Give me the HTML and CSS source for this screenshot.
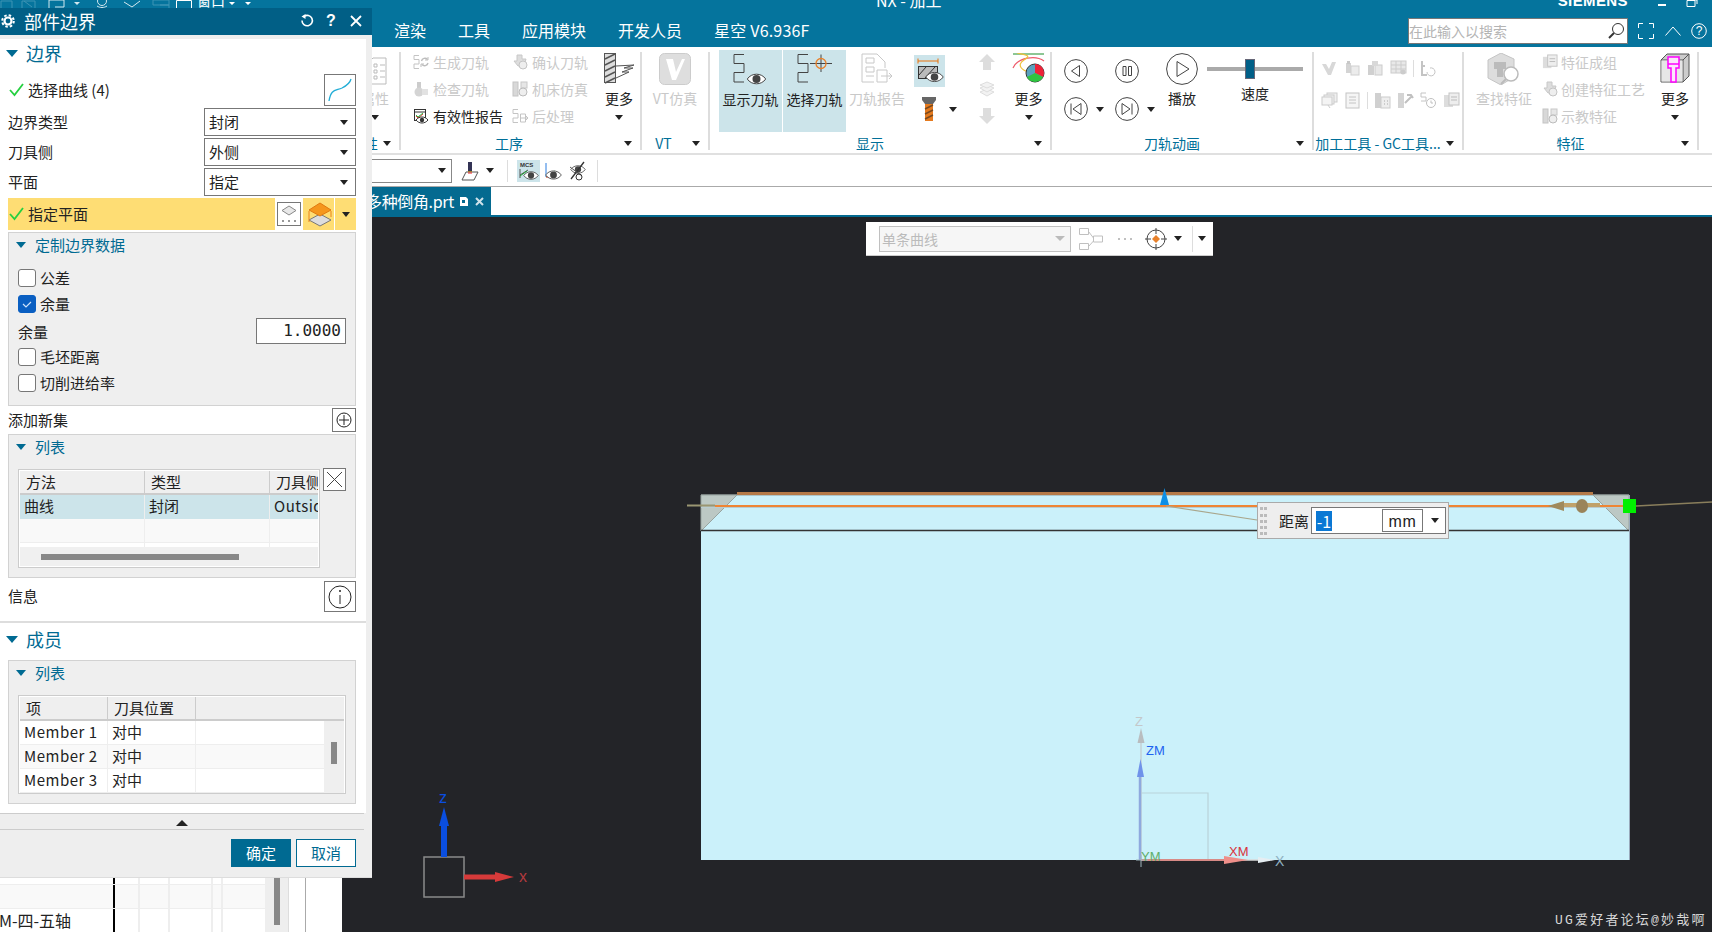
FILE: index.html
```html
<!DOCTYPE html>
<html lang="zh-CN">
<head>
<meta charset="utf-8">
<title>NX - 加工</title>
<link rel="stylesheet" href="styles.css">
</head>
<body>
<svg class="sprite" xmlns="http://www.w3.org/2000/svg">
  <symbol id="zz" viewBox="0 0 16 16"><path d="M6 1.500H1V5.500H6V10H1V14.500H6" fill="none" stroke="currentColor"/></symbol>
  <symbol id="gen" viewBox="0 0 16 16"><path d="M6 1.500H1V5.500H6V10H1V14.500H6" fill="none" stroke="#c4c4c4"/><path d="M8.500 7a3.500 3.500 0 0 1 6-1.500M15 9a3.500 3.500 0 0 1-6 1.500" fill="none" stroke="#bdbdbd" stroke-width="1.400"/><path d="M15 3v3h-3M8 13v-3h3" fill="none" stroke="#bdbdbd"/></symbol>
  <symbol id="post" viewBox="0 0 16 16"><path d="M6 1.500H1V5.500H6V10H1V14.500H6" fill="none" stroke="#c4c4c4"/><path d="M8.500 6h5v8h-5zM8.500 10H16M14 8l2 2-2 2" fill="#fff" stroke="#c4c4c4"/></symbol>
  <symbol id="eye" viewBox="0 0 20 14"><path d="M.8 7C5 .6 15 .6 19.200 7 15 13.400 5 13.400 .8 7Z" fill="#fff" stroke="currentColor"/><circle cx="10" cy="7" r="4" fill="currentColor"/></symbol>
  <symbol id="blob1" viewBox="0 0 16 16"><path d="M5 1h5v4h4l-2 7H6L2 7h3z" fill="#ddd" stroke="#c8c8c8"/><circle cx="11" cy="11" r="4" fill="#eee" stroke="#c4c4c4"/></symbol>
  <symbol id="blob2" viewBox="0 0 16 16"><rect x="4" y="1" width="4" height="7" fill="#ccc"/><circle cx="6" cy="11" r="4.500" fill="#d4d4d4"/><rect x="9" y="8" width="6" height="6" fill="#e2e2e2"/></symbol>
  <symbol id="blob3" viewBox="0 0 16 16"><rect x="1" y="1" width="5" height="14" fill="#d8d8d8" stroke="#c4c4c4"/><rect x="9" y="1" width="6" height="6" fill="#e6e6e6" stroke="#c8c8c8"/><circle cx="11" cy="11" r="4" fill="#eee" stroke="#bbb"/></symbol>
  <symbol id="blob4" viewBox="0 0 17 17"><path d="M1 4h4l3 5 3-7h4l-5 13H7z" fill="#d8d8d8"/></symbol>
  <symbol id="blob5" viewBox="0 0 17 17"><rect x="2" y="3" width="5" height="10" fill="#d4d4d4"/><rect x="7" y="6" width="8" height="9" fill="#ececec" stroke="#d0d0d0"/><rect x="3" y="1" width="3" height="3" fill="#c8c8c8"/></symbol>
  <symbol id="blob6" viewBox="0 0 17 17"><rect x="1" y="5" width="6" height="10" fill="#d0d0d0"/><rect x="8" y="5" width="7" height="10" fill="#e8e8e8" stroke="#ccc"/><rect x="5" y="1" width="6" height="5" fill="#d8d8d8"/></symbol>
  <symbol id="blob7" viewBox="0 0 17 17"><rect x="1" y="1" width="15" height="12" fill="#e8e8e8" stroke="#ccc"/><path d="M1 5h15M1 9h15M6 1v12M11 1v12" stroke="#ccc"/><circle cx="13" cy="12" r="2.500" fill="#ccc"/></symbol>
  <symbol id="blob8" viewBox="0 0 17 17"><path d="M2 1v14h5M2 6h3" stroke="#c4c4c4" fill="none" stroke-width="2"/><path d="M7 12a4 4 0 1 0 3-4" stroke="#c4c4c4" fill="none"/></symbol>
  <symbol id="blob9" viewBox="0 0 17 17"><rect x="6" y="1" width="10" height="9" fill="#f0f0f0" stroke="#ccc"/><rect x="3" y="3" width="10" height="9" fill="#f0f0f0" stroke="#ccc"/><rect x="1" y="5" width="10" height="8" fill="#f4f4f4" stroke="#ccc"/><path d="M7 13l2 3" stroke="#ccc"/></symbol>
  <symbol id="blob10" viewBox="0 0 17 17"><rect x="2" y="1" width="13" height="15" fill="#f5f5f5" stroke="#c4c4c4"/><path d="M5 5h7M5 8h7M5 11h7" stroke="#c4c4c4"/></symbol>
  <symbol id="blob11" viewBox="0 0 17 17"><rect x="1" y="1" width="6" height="15" fill="#d0d0d0"/><rect x="7" y="5" width="9" height="11" fill="#eee" stroke="#ccc"/><path d="M10 9h1M13 9h1M10 12h1M13 12h1" stroke="#aaa"/></symbol>
  <symbol id="blob12" viewBox="0 0 17 17"><rect x="1" y="1" width="6" height="15" fill="#d4d4d4"/><path d="M8 11l7-7M10 3l4 0 2 3" stroke="#c0c0c0" fill="none" stroke-width="2"/></symbol>
  <symbol id="blob13" viewBox="0 0 17 17"><path d="M6 1H1V5H6V9H1" fill="none" stroke="#c4c4c4"/><circle cx="11" cy="11" r="4.500" fill="#fff" stroke="#c0c0c0"/><path d="M11 8.500V11h2" stroke="#c0c0c0" fill="none"/></symbol>
  <symbol id="blob14" viewBox="0 0 17 17"><rect x="1" y="3" width="9" height="12" fill="#ddd"/><rect x="6" y="1" width="10" height="12" fill="#eee" stroke="#c4c4c4"/><path d="M8 5h6M8 8h6" stroke="#bbb"/></symbol>
</svg>

<header class="appbar">
  <div class="toprow">
    <svg class="qat" viewBox="0 0 270 8" width="270" height="8">
      <g fill="none" stroke="#3f94b4"><path d="M1 8V1h11v7M22 8V1h13v7"/><path d="M24 1l8 6"/></g>
      <g fill="none" stroke="#d3e8ef"><path d="M49 8V0h15v7h-9"/><circle cx="102" cy="1" r="4.500"/><path d="M97 6c3 2 7 2 10 0M102 7v1"/><path d="M124 2l8 5 8-6"/></g>
      <path d="M74 2h6l-3 3z" fill="#d3e8ef"/>
      <g fill="none" stroke="#3f94b4"><path d="M153 0h16v5h-16zM160 5h9v3"/></g>
      <path d="M176.500 8V.5h15V8" fill="none" stroke="#fff"/>
      <text x="197" y="6" class="qat-text">窗口</text>
      <path d="M229 2h6l-3 3zM245 2h6l-3 3z" fill="#fff"/>
    </svg>
    <span class="apptitle">NX - 加工</span>
    <span class="brand">SIEMENS</span>
    <svg class="winbtns" viewBox="0 0 57 13" width="57" height="13"><path d="M3 5h8" stroke="#fff" stroke-width="2"/><path d="M32 .5h8v6h-8zM35 0h7v4" fill="none" stroke="#fff"/></svg>
  </div>
  <div class="menurow">
    <nav class="menus"><span>渲染</span><span>工具</span><span>应用模块</span><span>开发人员</span><span class="menu-last">星空 V6.936F</span></nav>
    <div class="search">
      <span class="search-text">在此输入以搜索</span>
      <svg viewBox="0 0 18 18" width="18" height="18"><circle cx="11" cy="7" r="5.500" fill="none" stroke="#333"/><path d="M7 11l-5 5" stroke="#333" stroke-width="2"/></svg>
    </div>
    <svg class="hd-full" viewBox="0 0 16 16" width="16" height="16"><path d="M.5 5V.5H5M11 .5h4.500V5M15.500 11v4.500H11M5 15.500H.5V11" fill="none" stroke="#fff"/></svg>
    <svg class="hd-up" viewBox="0 0 16 10" width="16" height="10"><path d="M.5 9.500L8 1l7.500 8.500" fill="none" stroke="#fff"/></svg>
    <svg class="hd-help" viewBox="0 0 16 16" width="16" height="16"><circle cx="8" cy="8" r="7.300" fill="none" stroke="#fff"/><text x="8" y="12" text-anchor="middle" class="help-q">?</text></svg>
  </div>
</header>

<section class="ribbon">
  <div class="rg g0">
    <div class="rb rb-end">
      <div class="big w28">
        <svg class="bico" viewBox="0 0 28 32" width="28" height="32"><path d="M9 8l3-3h13v26H9z" fill="#fff" stroke="#bbb"/><path d="M13 11h3v3h-3zM19 12h5M13 17h3v3h-3zM19 18h5M13 23h3v3h-3zM19 24h5" fill="none" stroke="#bbb"/></svg>
        <span class="bigt off">属性</span>
        <i class="tri tri-more"></i>
      </div>
    </div>
    <div class="rf rf-right"><span class="rl">属性</span><i class="tri"></i></div>
  </div>

  <div class="rg g1">
    <div class="rb">
      <div class="rows w99">
        <div class="ri off"><svg class="i16"><use href="#gen"/></svg><span>生成刀轨</span></div>
        <div class="ri off"><svg class="i16"><use href="#blob2"/></svg><span>检查刀轨</span></div>
        <div class="ri"><svg class="i16" viewBox="0 0 16 16"><rect x="1.500" y="1.500" width="11" height="11" fill="#fff" stroke="#333"/><path d="M1.500 4h11" stroke="#333"/><path d="M3 8l2 2 5-4" stroke="#e33" fill="none"/><path d="M3 7l2 2 5-4" stroke="#2b4" fill="none"/><path d="M3 12c3-4 9-4 12 0-3 4-9 4-12 0z" fill="#fff" stroke="#333"/><circle cx="9" cy="12" r="2.200" fill="#333"/></svg><span>有效性报告</span></div>
      </div>
      <div class="rows w92">
        <div class="ri off"><svg class="i16"><use href="#blob1"/></svg><span>确认刀轨</span></div>
        <div class="ri off"><svg class="i16"><use href="#blob3"/></svg><span>机床仿真</span></div>
        <div class="ri off"><svg class="i16"><use href="#post"/></svg><span>后处理</span></div>
      </div>
      <div class="big w30 more">
        <svg class="bico" viewBox="0 0 30 32" width="30" height="32"><rect x=".5" y=".5" width="11" height="29" fill="#ddd" stroke="#555"/><path d="M1 6l10-5M1 12l10-5M1 18l10-5M1 24l10-5M1 30l10-5" stroke="#555" stroke-width="1.500"/><path d="M12 13l18-1-10 3 9 0-11 4 7 0-13 6" fill="#fff" stroke="#555"/></svg>
        <span class="bigt">更多</span>
        <i class="tri tri-more"></i>
      </div>
    </div>
    <div class="rf"><span class="rl">工序</span><i class="tri"></i></div>
  </div>

  <div class="rg g2">
    <div class="rb">
      <div class="big w66">
        <svg class="bico" viewBox="0 0 32 32" width="32" height="32"><rect x=".5" y=".5" width="31" height="31" rx="5" fill="#dedede" stroke="#ccc"/><path d="M7 6h7l3 13 6-13h3l-9 21h-4z" fill="#fff"/></svg>
        <span class="bigt off">VT仿真</span>
      </div>
    </div>
    <div class="rf"><span class="rl">VT</span><i class="tri"></i></div>
  </div>

  <div class="rg g3">
    <div class="rb">
      <div class="big tog w63">
        <svg class="bico" viewBox="0 0 40 32" width="40" height="32"><path d="M13 .5H3V9.500H13V18.500H3V28H13" fill="none" stroke="#444"/><use href="#eye" x="15" y="18" width="21" height="14" class="c-eye"/></svg>
        <span class="bigt">显示刀轨</span>
      </div>
      <div class="big tog w63 gap1">
        <svg class="bico" viewBox="0 0 40 32" width="40" height="32"><path d="M13 .5H3V9.500H13V18.500H3V28H13" fill="none" stroke="#444"/><path d="M15 9.500H37M26 .5V18" stroke="#444"/><circle cx="26" cy="9.500" r="5" fill="none" stroke="#e8812b" stroke-width="1.300"/></svg>
        <span class="bigt">选择刀轨</span>
      </div>
      <div class="big w62">
        <svg class="bico" viewBox="0 0 34 32" width="34" height="32"><path d="M2 1h15l8 8v6M2 1v28h12" fill="none" stroke="#c8c8c8"/><path d="M6 5h8v5H6zM6 14h8v5H6zM6 23h8" fill="none" stroke="#c8c8c8"/><path d="M17 17h10v12H17zM21 23h11M29 20l3 3-3 3" fill="#fff" stroke="#c8c8c8"/></svg>
        <span class="bigt off">刀轨报告</span>
      </div>
      <div class="toolcol">
        <span class="toolbtn"><svg viewBox="0 0 31 32" width="31" height="32"><path d="M4 6h20M4 3.500v5M24 3.500v5" stroke="#e8720c" fill="none"/><rect x="4.500" y="11.500" width="19" height="12" fill="#bbb" stroke="#333"/><path d="M5 20l7-8M11 23l10-11M17 23l6-6" stroke="#333"/><use href="#eye" x="11" y="15" width="19" height="14" class="c-eye"/></svg></span>
        <div class="toolrow">
          <svg viewBox="0 0 14 24" width="14" height="24"><path d="M0 0h14v3l-3 4H3L0 3z" fill="#666"/><rect x="3" y="7" width="8" height="17" fill="#e57a1e"/><path d="M3 12l8-4M3 17l8-4M3 22l8-4" stroke="#7a4a1e" stroke-width="1.500"/></svg>
          <i class="tri"></i>
        </div>
      </div>
      <div class="updown">
        <svg viewBox="0 0 20 20" width="20" height="20"><path d="M10 2l8 8h-4v8H6v-8H2z" fill="#ddd"/></svg>
        <svg viewBox="0 0 20 20" width="20" height="20"><g fill="#f2f2f2" stroke="#ddd"><path d="M3 13l7-3 7 3-7 4z"/><path d="M3 9l7-3 7 3-7 4z"/><path d="M3 6l7-3 7 3-7 3z"/></g></svg>
        <svg viewBox="0 0 20 20" width="20" height="20"><path d="M10 18l8-8h-4V2H6v8H2z" fill="#ddd"/></svg>
      </div>
      <div class="big w33 more mo-d">
        <svg class="bico" viewBox="0 0 33 32" width="33" height="32"><path d="M1 1h31" stroke="#1a8f2a"/><path d="M1 15C6 4 24 2 32 8" fill="none" stroke="#ee5a6a" stroke-width="1.200"/><path d="M5 0c9 2 15 2 7 7-8 5-2 11 6 12" fill="none" stroke="#f0c23c" stroke-width="1.200"/><circle cx="23" cy="20" r="9" fill="#5aa1be" stroke="#333"/><path d="M23 20V11a9 9 0 0 1 8 13z" fill="#ee2238"/><path d="M23 20l8 4a9 9 0 0 1-16 0z" fill="#2fc53f"/></svg>
        <span class="bigt">更多</span>
        <i class="tri tri-more"></i>
      </div>
    </div>
    <div class="rf"><span class="rl">显示</span><i class="tri"></i></div>
  </div>

  <div class="rg g4">
    <div class="rb">
      <div class="anim">
        <div class="animcell"><svg class="circ" viewBox="0 0 24 24"><circle cx="12" cy="12" r="11.400"/><path d="M15.500 6.500v11L7.500 12z"/></svg></div>
        <div class="animcell"><svg class="circ" viewBox="0 0 24 24"><circle cx="12" cy="12" r="11.400"/><path d="M8 7.500h3v9H8zM13.500 7.500h3v9h-3z"/></svg></div>
        <div class="animcell"><svg class="circ" viewBox="0 0 24 24"><circle cx="12" cy="12" r="11.400"/><path d="M7 6.500v11M17 6.500v11L9 12z"/></svg><i class="tri"></i></div>
        <div class="animcell"><svg class="circ" viewBox="0 0 24 24"><circle cx="12" cy="12" r="11.400"/><path d="M17 6.500v11M7 6.500v11l8-5.500z"/></svg><i class="tri"></i></div>
      </div>
      <div class="big w32 play">
        <svg class="circ circ-big" viewBox="0 0 32 32"><circle cx="16" cy="16" r="15.400"/><path d="M11 8.500v15L23 16z"/></svg>
        <span class="bigt">播放</span>
      </div>
      <div class="speed">
        <div class="track"><i class="thumb"></i></div>
        <span class="bigt">速度</span>
      </div>
    </div>
    <div class="rf"><span class="rl">刀轨动画</span><i class="tri"></i></div>
  </div>

  <div class="rg g5">
    <div class="rb rb-col">
      <div class="mini">
        <svg class="i17"><use href="#blob4"/></svg><svg class="i17"><use href="#blob5"/></svg><svg class="i17"><use href="#blob6"/></svg><svg class="i17"><use href="#blob7"/></svg><i class="vsep"></i><svg class="i17"><use href="#blob8"/></svg>
      </div>
      <div class="mini">
        <svg class="i17"><use href="#blob9"/></svg><svg class="i17"><use href="#blob10"/></svg><i class="vsep"></i><svg class="i17"><use href="#blob11"/></svg><svg class="i17"><use href="#blob12"/></svg><svg class="i17"><use href="#blob13"/></svg><svg class="i17"><use href="#blob14"/></svg>
      </div>
    </div>
    <div class="rf"><span class="rl">加工工具 - GC工具...</span><i class="tri"></i></div>
  </div>

  <div class="rg g6">
    <div class="rb">
      <div class="big w56">
        <svg class="bico" viewBox="0 0 34 32" width="34" height="32"><path d="M1 7l13-7 13 6v18l-13 8-13-7z" fill="#ddd" stroke="#c4c4c4"/><path d="M7 9h12v7h-3v8h-6v-8H7z" fill="#bbb"/><circle cx="24" cy="21" r="7" fill="#fff" stroke="#bbb" stroke-width="1.500"/><path d="M19 26l-5 5" stroke="#bbb" stroke-width="2"/></svg>
        <span class="bigt off">查找特征</span>
      </div>
      <div class="rows feat">
        <div class="ri off"><svg class="i16"><use href="#blob14"/></svg><span>特征成组</span></div>
        <div class="ri off"><svg class="i16"><use href="#blob1"/></svg><span>创建特征工艺</span></div>
        <div class="ri off"><svg class="i16"><use href="#blob3"/></svg><span>示教特征</span></div>
      </div>
      <div class="big w30 more mo-f">
        <svg class="bico" viewBox="0 0 30 32" width="30" height="32"><path d="M1 7l6-6h22v22l-6 6H1z" fill="#ccc" stroke="#555"/><path d="M1 7h22v22M23 7l6-6" fill="none" stroke="#555"/><rect x="1.500" y="7.500" width="21" height="21" fill="#e6e6e6"/><path d="M8 4h11v11h-3v14h-5V15H8z" fill="#fbe6fb" stroke="#f0f" stroke-width="1.500"/><path d="M8 11h11" stroke="#f0f" stroke-width="1.500"/></svg>
        <span class="bigt">更多</span>
        <i class="tri tri-more"></i>
      </div>
    </div>
    <div class="rf"><span class="rl">特征</span><i class="tri"></i></div>
  </div>
</section>

<section class="quick">
  <div class="combo"><i class="tri"></i></div>
  <svg class="q-a" viewBox="0 0 18 20" width="18" height="20"><rect x="7" y="1" width="4" height="9" fill="#335"/><path d="M7 10h4v6H7z" fill="#f4b000"/><path d="M1 19l4-8h12l-4 8z" fill="#fff" stroke="#555"/><path d="M7 12h4" stroke="#e22"/></svg>
  <i class="tri q-tri"></i>
  <i class="qsep q-s1"></i>
  <span class="q-on"><svg viewBox="0 0 23 22" width="23" height="22"><text x="3" y="7" class="mcs">MCS</text><path d="M3 9v9M3 15l8-5" stroke="#555" fill="none"/><path d="M3 16l7-5" stroke="#2a3" fill="none"/><use href="#eye" x="6" y="10" width="16" height="11" class="c-eye"/></svg></span>
  <svg class="q-b" viewBox="0 0 18 20" width="18" height="20"><path d="M2 2v14" stroke="#2a7de0"/><path d="M2 16l9-6" stroke="#2a3"/><path d="M2 16h5" stroke="#e33"/><use href="#eye" x="1" y="8" width="17" height="12" class="c-eye"/></svg>
  <svg class="q-c" viewBox="0 0 18 20" width="18" height="20"><use href="#eye" x="1" y="3" width="16" height="11" class="c-eye"/><path d="M15 1L2 18" stroke="#333" stroke-width="1.300"/><path d="M1 6l12 9" stroke="#555"/><circle cx="10" cy="16" r="3" fill="none" stroke="#333"/></svg>
  <i class="qsep q-s2"></i>
</section>

<section class="tabs">
  <div class="tab">
    <span class="tab-t">多种倒角.prt</span>
    <svg class="tab-doc" viewBox="0 0 10 11" width="10" height="11"><path d="M1 1h6l2 2v7H1z" fill="#fff"/><path d="M3 4h3v3H3z" fill="#046a90"/></svg>
    <svg class="tab-x" viewBox="0 0 9 9" width="9" height="9"><path d="M1 1l7 7M8 1L1 8" stroke="#cfe2ea" stroke-width="2"/></svg>
  </div>
</section>

<main class="viewport">
  <svg class="scene" viewBox="0 217 1712 715" width="1712" height="715">
    <rect x="701" y="495" width="928" height="365" fill="#cbf1fa"/>
    <path d="M701 495H1629" stroke="#8f9a98"/>
    <path d="M701 495h36l-36 36zM1593 495h36v36z" fill="#bcc8c4" stroke="#98a4a0"/>
    <rect x="737" y="492" width="856" height="3" fill="#b57a48"/>
    <path d="M701 530.500H1629" stroke="#333" stroke-width="1.400"/>
    <path d="M1629.500 495V860" stroke="#9ab"/>
    <path d="M701 507.500H1629" stroke="#b9ccd0"/>
    <path d="M687 505.500H715" stroke="#9a9672" stroke-width="2"/>
    <path d="M715 506H1623" stroke="#ee8534" stroke-width="2"/>
    <path d="M1636 506L1712 502" stroke="#8a7f5c" stroke-width="1.500"/>
    <path d="M1166 506L1257 520" stroke="#a9a68c" stroke-width="1.200"/>
    <path d="M1164.500 488L1169 505H1160z" fill="#0c8fe6"/>
    <path d="M1548 506L1564 501V511z" fill="#a08a5c"/>
    <path d="M1564 505H1600" stroke="#c0a26a" stroke-width="4"/>
    <ellipse cx="1582" cy="506" rx="6" ry="7" fill="#9a845a"/>
    <rect x="1623" y="499" width="13" height="14" fill="#00f000"/>

    <path d="M1141.500 793H1208V860" fill="none" stroke="#b9d3d9" stroke-width="1.200"/>
    <path d="M1141 860V735" stroke="#c5d0d4" stroke-width="1.500"/>
    <path d="M1141 728l3.500 15h-7z" fill="#b9bdbf"/>
    <path d="M1140 860V775" stroke="#8fa9de" stroke-width="2.500"/>
    <path d="M1140.500 759l3.500 18h-7z" fill="#6f92ea"/>
    <path d="M1141 860H1270" stroke="#d9d9d9" stroke-width="1.500"/>
    <path d="M1141 860H1240" stroke="#d88a86" stroke-width="2"/>
    <path d="M1224 856l24 4-24 4z" fill="#ef8f8a"/>
    <path d="M1258 857l17 3-17 3z" fill="#e6eef2"/>
    <path d="M1136 860h12M1141 855v12" stroke="#9fb5bd"/>
    <text x="1135" y="726" class="ax ax-z">Z</text>
    <text x="1146" y="755" class="ax ax-zm">ZM</text>
    <text x="1141" y="861" class="ax ax-ym">YM</text>
    <text x="1229" y="856" class="ax ax-xm">XM</text>
    <text x="1275" y="866" class="ax ax-x">X</text>

    <rect x="424" y="857" width="40" height="40" fill="none" stroke="#8a8a8a" stroke-width="1.500"/>
    <path d="M444 857V825" stroke="#0a4ee0" stroke-width="6"/>
    <path d="M444 807l5 19h-10z" fill="#0a4ee0"/>
    <path d="M464 877H497" stroke="#d63a3a" stroke-width="5"/>
    <path d="M495 872l19 5-19 5z" fill="#d63a3a"/>
    <text x="439" y="803" class="ax ax-tz">z</text>
    <text x="519" y="882" class="ax ax-tx">x</text>
  </svg>

  <div class="selbar">
    <div class="selcombo"><span>单条曲线</span><i class="tri tri-pale"></i></div>
    <svg viewBox="0 0 24 24" width="24" height="24" class="sb-net"><path d="M.5 1.500h9v6h-9zM.5 16.500h9v6h-9zM14.500 9h9v6h-9zM9.500 4.500L14.500 11M9.500 19.500L14.500 14" fill="none" stroke="#c0c0c0"/></svg>
    <svg viewBox="0 0 14 4" width="14" height="4" class="sb-dots"><path d="M0 1h2v2H0zM6 1h2v2H6zM12 1h2v2h-2z" fill="#c0c0c0"/></svg>
    <svg viewBox="0 0 24 24" width="24" height="24" class="sb-snap"><circle cx="12" cy="12" r="9" fill="none" stroke="#444"/><path d="M12 1v6M12 17v6M1 12h6M17 12h6" stroke="#444"/><path d="M12 8l4 4-4 4-4-4z" fill="#e8812b"/></svg>
    <i class="tri sb-tri"></i>
    <i class="qsep sb-sep"></i>
    <i class="tri sb-tri2"></i>
  </div>

  <div class="dist">
    <span class="grip"></span><span class="grip"></span>
    <span class="dist-l">距离</span>
    <div class="dist-f">
      <span class="dist-v">-1</span>
      <span class="dist-u">mm</span>
      <i class="tri"></i>
    </div>
  </div>

  <div class="watermark">UG爱好者论坛@妙哉啊</div>

  <div class="under">
    <div class="under-tbl">
      <div class="urow u1"><i></i><i></i><i></i><i></i><i></i><i></i></div>
      <div class="urow u2"><i></i><i></i><i></i><i></i><i></i><i></i></div>
      <div class="urow u3"><i class="utext">M-四-五轴</i><i></i><i></i><i></i><i></i><i></i></div>
    </div>
    <div class="uscroll"><i></i></div>
    <div class="ublank"></div>
    <div class="ublank2"></div>
  </div>
</main>

<aside class="panel">
  <div class="ptitle">
    <svg viewBox="0 0 14 14" width="14" height="14"><circle cx="7" cy="7" r="3.500" fill="none" stroke="#fff" stroke-width="2.200"/><circle cx="7" cy="7" r="5.800" fill="none" stroke="#fff" stroke-width="2" stroke-dasharray="2.500 2.050"/></svg>
    <span class="ptitle-t">部件边界</span>
    <svg class="pt-reset" viewBox="0 0 14 14" width="14" height="14"><path d="M4 2.500a5.200 5.200 0 1 1-2 4" fill="none" stroke="#fff" stroke-width="1.600"/><path d="M5.500 0v5L1.500 2.500z" fill="#fff"/></svg>
    <span class="pt-help">?</span>
    <svg class="pt-x" viewBox="0 0 12 12" width="12" height="12"><path d="M1 1l10 10M11 1L1 11" stroke="#fff" stroke-width="1.800"/></svg>
  </div>

  <div class="pbody">
    <section class="psec psec-a">
      <div class="sechead"><i class="tri tri-blue"></i><span>边界</span></div>
      <div class="prow r-curve">
        <svg class="chk" viewBox="0 0 15 14" width="15" height="14"><path d="M1 7l4.500 5L14 1" fill="none" stroke="#25d040" stroke-width="1.800"/></svg>
        <span class="ptext">选择曲线 (4)</span>
        <span class="iconbtn ib-r"><svg viewBox="0 0 30 30" width="30" height="30"><path d="M4 26c2-12 6-10 13-13 6-3 8-5 9-9" fill="none" stroke="#22add6" stroke-width="1.300"/></svg></span>
      </div>
      <div class="prow r-sel"><span class="plabel">边界类型</span><div class="sel"><span>封闭</span><i class="tri"></i></div></div>
      <div class="prow r-sel"><span class="plabel">刀具侧</span><div class="sel"><span>外侧</span><i class="tri"></i></div></div>
      <div class="prow r-sel"><span class="plabel">平面</span><div class="sel"><span>指定</span><i class="tri"></i></div></div>
      <div class="hl">
        <div class="hl-a">
          <svg class="chk" viewBox="0 0 15 14" width="15" height="14"><path d="M1 7l4.500 5L14 1" fill="none" stroke="#25d040" stroke-width="1.800"/></svg>
          <span class="ptext">指定平面</span>
        </div>
        <div class="hl-b"><span class="iconbtn ib-s"><svg viewBox="0 0 22 22" width="22" height="22"><path d="M11 3l7 4.500-7 4.500-7-4.500z" fill="#e8e8e8" stroke="#888"/><path d="M4 18h2M10 18h2M16 18h2" stroke="#333"/></svg></span></div>
        <div class="hl-c">
          <svg viewBox="0 0 26 25" width="26" height="25"><path d="M13 12l11 6-11 6L2 18z" fill="#ddd" stroke="#777"/><path d="M13 1l11 7-11 6L2 8z" fill="#f5971c" stroke="#e07a10"/><path d="M2 9v11M24 9v6" stroke="#e8841c"/></svg>
          <i class="hl-line"></i>
          <i class="tri"></i>
        </div>
      </div>
      <div class="box box-c">
        <div class="boxhead"><i class="tri tri-blue2"></i><span>定制边界数据</span></div>
        <div class="crow crow-first"><i class="cb"></i><span>公差</span></div>
        <div class="crow"><i class="cb on"><svg viewBox="0 0 18 18" width="18" height="18"><path d="M5 9l3 3 5-5" fill="none" stroke="#cfe3fa" stroke-width="1.200"/></svg></i><span>余量</span></div>
        <div class="crow crow-num"><span>余量</span><span class="num">1.0000</span></div>
        <div class="crow"><i class="cb"></i><span>毛坯距离</span></div>
        <div class="crow"><i class="cb"></i><span>切削进给率</span></div>
      </div>
      <div class="prow r-add">
        <span class="plabel">添加新集</span>
        <span class="iconbtn ib-a"><svg viewBox="0 0 22 22" width="22" height="22"><circle cx="11" cy="11" r="7" fill="none" stroke="#222"/><path d="M11 6v10M6 11h10" stroke="#222"/></svg></span>
      </div>
      <div class="box box-l">
        <div class="boxhead"><i class="tri tri-blue2"></i><span>列表</span></div>
        <div class="listwrap">
          <div class="tbl tbl-a">
            <div class="trow thead"><span>方法</span><span>类型</span><span>刀具侧</span></div>
            <div class="trow tsel"><span>曲线</span><span>封闭</span><span>Outside</span></div>
            <div class="trow talt"><span></span><span></span><span></span></div>
            <div class="trow tsliver"><span></span><span></span><span></span></div>
            <div class="hscroll"><i></i></div>
          </div>
          <span class="iconbtn ib-x"><svg viewBox="0 0 21 21" width="21" height="21"><path d="M3 3l15 15M18 3L3 18" stroke="#444"/></svg></span>
        </div>
      </div>
      <div class="prow r-info">
        <span class="plabel">信息</span>
        <span class="iconbtn ib-r"><svg viewBox="0 0 30 30" width="30" height="30"><circle cx="15" cy="15" r="11" fill="none" stroke="#222"/><path d="M15 13v9" stroke="#222"/><circle cx="15" cy="9" r="1" fill="#222"/></svg></span>
      </div>
    </section>

    <section class="psec psec-b">
      <div class="sechead"><i class="tri tri-blue"></i><span>成员</span></div>
      <div class="box box-m">
        <div class="boxhead"><i class="tri tri-blue2"></i><span>列表</span></div>
        <div class="tbl tbl-b">
          <div class="trow thead"><span>项</span><span>刀具位置</span><span></span></div>
          <div class="tb-body">
            <div class="tb-rows">
              <div class="trow"><span>Member 1</span><span>对中</span><span></span></div>
              <div class="trow talt"><span>Member 2</span><span>对中</span><span></span></div>
              <div class="trow"><span>Member 3</span><span>对中</span><span></span></div>
            </div>
            <div class="vscroll"><i></i></div>
          </div>
        </div>
      </div>
    </section>
  </div>

  <div class="collapse"><i class="tri tri-up"></i></div>
  <div class="pfoot">
    <button class="btn btn-ok" type="button">确定</button>
    <button class="btn btn-no" type="button">取消</button>
  </div>
</aside>
</body>
</html>
```

FILE: styles.css
```css
* { box-sizing: border-box; }
html, body { margin: 0; padding: 0; }
body {
  width: 1712px; height: 932px; overflow: hidden; position: relative;
  background: #fff; color: #222;
  font-family: "Noto Sans CJK SC", "Noto Sans", "Liberation Sans", sans-serif;
  font-size: 14px;
  display: flex; flex-direction: column;
}
.sprite { display: none; }
i { display: block; font-style: normal; }

.tri { width: 0; height: 0; flex: none; border-left: 4.5px solid transparent; border-right: 4.5px solid transparent; border-top: 5px solid #222; }
.off { color: #c9c9c9; }

/* header */
.appbar { height: 47px; background: #05749d; color: #fff; overflow: hidden; flex: none; }
.toprow { height: 14px; display: flex; align-items: flex-start; overflow: hidden; }
.qat { flex: none; }
.qat-text { font-size: 14px; fill: #fff; }
.apptitle { margin-left: 606px; margin-top: -9px; line-height: 18px; font-size: 16px; }
.brand { margin-left: auto; margin-top: -8px; font: bold 15px/18px "Liberation Sans", sans-serif; letter-spacing: .4px; }
.winbtns { margin-left: 27px; flex: none; }
.menurow { height: 33px; display: flex; align-items: center; }
.menus { display: flex; gap: 32px; margin-left: 394px; margin-top: -2px; font-size: 16px; white-space: nowrap; }
.menu-last { letter-spacing: .2px; }
.search { margin-left: auto; width: 220px; height: 26px; background: #fff; border: 1px solid #777; display: flex; align-items: center; justify-content: space-between; padding-right: 2px; }
.search-text { color: #b4b4b4; font-size: 14px; }
.hd-full { margin-left: 10px; }
.hd-up { margin-left: 11px; }
.hd-help { margin-left: 10px; margin-right: 5px; }
.help-q { font: 12px "Liberation Sans", sans-serif; fill: #fff; }

/* ribbon */
.ribbon { height: 108px; flex: none; display: flex; border-bottom: 2px solid #e0e0e0; background: #fff; }
.rg { margin-top: 5px; height: 98px; border-right: 2px solid #ddd; flex: none; display: flex; flex-direction: column; }
.g0 { width: 401px; } .g1 { width: 241px; } .g2 { width: 68px; } .g3 { width: 342px; }
.g4 { width: 262px; } .g5 { width: 150px; } .g6 { width: 235px; }
.rb { height: 84px; display: flex; flex: none; }
.rb-end { justify-content: flex-end; padding-right: 10px; }
.rb-col { flex-direction: column; padding: 8px 0 0 7px; gap: 15px; }
.rf { height: 14px; display: flex; align-items: center; padding-right: 8px; white-space: nowrap; }
.rl { flex: 1; text-align: center; color: #006f99; line-height: 16px; font-size: 14px; padding-right: 4px; }
.g1 .rl, .g2 .rl { padding-right: 7px; }
.rf-right .rl { text-align: right; padding-right: 5px; }

.big { display: flex; flex-direction: column; align-items: center; flex: none; }
.bico { margin-top: 1px; flex: none; }
.bigt { margin-top: 3px; line-height: 20px; font-size: 14px; white-space: nowrap; }
.tri-more { margin-top: 7px; }
.w28 { width: 28px; } .w30 { width: 30px; } .w32 { width: 32px; } .w33 { width: 33px; }
.w56 { width: 56px; } .w62 { width: 62px; } .w63 { width: 63px; } .w66 { width: 66px; }
.w99 { width: 99px; } .w92 { width: 92px; }
.g1 .rows.w99 { margin-left: 12px; }
.rows { margin-top: -4px; display: flex; flex-direction: column; flex: none; }
.ri { height: 27px; display: flex; align-items: center; gap: 4px; white-space: nowrap; }
.i16 { width: 16px; height: 16px; flex: none; }
.i17 { width: 17px; height: 17px; flex: none; }

.tog { margin-top: -2px; padding-top: 3px; height: 82px; background: #cce4ea; }
.g3 .tog:first-child { margin-left: 9px; }
.gap1 { margin-left: 1px; }
.toolcol { width: 50px; margin-left: 6px; flex: none; padding-top: 3px; }
.toolbtn { display: block; width: 31px; height: 32px; background: #cce4ea; }
.toolrow { display: flex; align-items: center; margin: 10px 0 0 8px; }
.toolrow .tri { margin-left: 13px; }
.updown { margin-left: 13px; width: 20px; display: flex; flex-direction: column; gap: 7px; flex: none; }
.mo-d { margin-left: 15px; }
.anim { margin: 7px 0 0 12px; display: grid; grid-template-columns: 51px 40px; row-gap: 14px; align-content: start; flex: none; }
.animcell { display: flex; align-items: center; }
.animcell .tri { margin-left: 8px; }
.circ { width: 24px; height: 24px; fill: none; stroke: #444; stroke-width: 1; }
.circ-big { width: 32px; height: 32px; margin-top: 1px; flex: none; }
.play { margin-left: 11px; }
.speed { margin-left: 9px; width: 96px; display: flex; flex-direction: column; align-items: center; flex: none; margin-top: 7px; }
.speed .bigt { margin-top: 4px; }
.track { width: 96px; height: 20px; background: linear-gradient(#aaa, #aaa) center / 100% 4px no-repeat; padding-left: 38px; }
.thumb { width: 10px; height: 20px; background: #005f87; border: 1px solid #667; }
.mini { display: flex; align-items: center; gap: 6px; height: 17px; }
.vsep { width: 1px; height: 17px; background: #ddd; }
.g6 .w56 { margin-left: 12px; }
.feat { margin-left: 10px; width: 113px; }
.feat .ri { gap: 3px; }
.mo-f { margin-left: 5px; }

/* quick toolbar */
.quick { height: 32px; flex: none; display: flex; align-items: center; border-bottom: 1px solid #aaa; background: #fff; }
.combo { width: 112px; height: 24px; margin-left: 340px; border: 1px solid #888; display: flex; align-items: center; justify-content: flex-end; padding-right: 5px; }
.q-a { margin-left: 9px; }
.q-tri { margin-left: 7px; }
.qsep { width: 1px; height: 22px; background: #ddd; flex: none; }
.q-s1 { margin-left: 13px; }
.q-on { width: 23px; height: 22px; margin-left: 9px; background: #cce4ea; display: block; }
.mcs { font: bold 6px "Liberation Sans", sans-serif; fill: #333; }
.q-b { margin-left: 4px; }
.q-c { margin-left: 7px; }
.q-s2 { margin-left: 10px; }
.c-eye { color: #444; }

/* tabs */
.tabs { height: 30px; flex: none; border-bottom: 2px solid #046a90; background: #fff; }
.tab { width: 151px; height: 28px; margin-left: 340px; background: #046a90; color: #fff; font-size: 16px; display: flex; align-items: center; padding-left: 26px; white-space: nowrap; }
.tab-t { letter-spacing: -.35px; }
.tab-doc { margin-left: 5px; }
.tab-x { margin-left: 6px; }

/* viewport */
.viewport { flex: 1; position: relative; background: #232428; overflow: hidden; }
.scene { position: absolute; left: 0; top: 0; }
.ax { font: 13px "Liberation Sans", sans-serif; }
.ax-z { fill: #c4c8ca; }
.ax-zm { fill: #1d63f0; }
.ax-ym { fill: #5fae6a; }
.ax-xm { fill: #d9333c; }
.ax-x { fill: #8fb0c0; font-size: 14px; }
.ax-tz { fill: #0a4ee0; font-size: 16px; }
.ax-tx { fill: #b23a3e; font-size: 16px; }

.selbar { position: absolute; left: 866px; top: 5px; width: 347px; height: 34px; background: #fff; border-bottom: 1px solid #ccc; display: flex; align-items: center; padding-left: 13px; }
.selcombo { width: 192px; height: 26px; border: 1px solid #c0c0c0; background: #f6f6f6; color: #bbb; display: flex; align-items: center; justify-content: space-between; padding: 0 5px 0 2px; flex: none; }
.tri-pale { border-top-color: #bbb; border-left-width: 5px; border-right-width: 5px; }
.sb-net { margin-left: 8px; flex: none; }
.sb-dots { margin-left: 15px; flex: none; }
.sb-snap { margin-left: 12px; flex: none; }
.sb-tri { margin-left: 6px; }
.sb-sep { margin-left: 10px; height: 26px; }
.sb-tri2 { margin-left: 5px; }

.dist { position: absolute; left: 1257px; top: 285px; width: 192px; height: 37px; background: #eee; border: 1px solid #aaa; display: flex; align-items: center; padding-left: 2px; }
.grip { width: 3px; height: 28px; border-left: 3px dotted #bbb; margin-right: 1px; flex: none; }
.dist-l { margin-left: 11px; line-height: 20px; font-size: 15px; }
.dist-f { margin-left: 2px; width: 135px; height: 27px; background: #fff; border: 1px solid #777; display: flex; align-items: center; padding-left: 4px; font-size: 16px; }
.dist-v { width: 16px; height: 20px; line-height: 20px; background: #0a78d4; color: #fff; text-align: center; flex: none; }
.dist-u { margin-left: 50px; width: 41px; height: 23px; border: 1px solid #777; text-align: center; flex: none; font: 16px/23px "Liberation Sans", sans-serif; letter-spacing: .6px; }
.dist-f .tri { margin-left: 8px; }

.watermark { position: absolute; left: 1555px; top: 694px; color: #d8d8d8; font: 13px/20px "Liberation Mono", "Noto Sans CJK SC", monospace; letter-spacing: 2.200px; white-space: nowrap; }

.under { position: absolute; left: 0; bottom: 0; width: 342px; height: 54px; background: #fff; display: flex; }
.under-tbl { width: 267px; flex: none; }
.urow { display: grid; grid-template-columns: 115px 25px 30px 43px 10px 44px; }
.urow i { border-right: 2px solid #eee; }
.urow i:first-child { border-right: 2px solid #000; }
.u1 { height: 7px; border-bottom: 1px solid #eee; }
.u2 { height: 24px; background: #f9f9f9; border-bottom: 1px solid #eee; }
.u3 { height: 23px; }
.utext { font-size: 16px; line-height: 23px; margin-left: -1px; white-space: nowrap; }
.uscroll { width: 21px; background: #eee; padding-left: 7px; flex: none; }
.uscroll i { width: 6px; height: 47px; background: #888; }
.ublank { width: 17px; border-left: 1px solid #ddd; flex: none; }
.ublank2 { flex: 1; border-left: 1px solid #aaa; }

/* panel */
.panel { position: absolute; left: 0; top: 8px; width: 372px; height: 870px; background: #eee; border-bottom: 1px solid #ddd; display: flex; flex-direction: column; font-size: 15px; }
.ptitle { height: 27px; flex: none; background: #015f86; color: #fff; display: flex; align-items: center; padding: 0 0 2px 1px; }
.ptitle-t { margin-left: 9px; font-size: 18px; line-height: 24px; }
.pt-reset { margin-left: auto; }
.pt-help { margin-left: 12px; font: bold 16px/20px "Liberation Sans", sans-serif; width: 10px; }
.pt-x { margin-left: 14px; margin-right: 10px; }
.pbody { margin-top: 4px; height: 774px; width: 366px; background: #fff; flex: none; }
.psec { padding: 0 10px 0 8px; }
.psec-a { height: 584px; border-bottom: 2px solid #ddd; }
.sechead { height: 28px; display: flex; align-items: center; margin-left: -2px; color: #006a92; font-size: 18px; }
.sechead .tri { margin-right: 8px; }
.tri-blue { border-left-width: 6px; border-right-width: 6px; border-top: 7px solid #006a92; }
.tri-blue2 { border-left-width: 5px; border-right-width: 5px; border-top: 6px solid #006a92; margin-right: 9px; }
.prow { display: flex; align-items: center; }
.r-curve { height: 32px; margin-top: 7px; }
.chk { flex: none; margin-left: 1px; }
.ptext { margin-left: 4px; line-height: 20px; white-space: nowrap; }
.plabel { line-height: 20px; }
.iconbtn { display: flex; align-items: center; justify-content: center; background: #fff; border: 1px solid #777; flex: none; }
.ib-r { width: 32px; height: 32px; margin-left: auto; }
.r-sel { height: 28px; margin-top: 2px; justify-content: space-between; }
.sel { width: 152px; height: 28px; border: 1px solid #777; display: flex; align-items: center; justify-content: space-between; padding: 0 7px 0 4px; }
.sel span { padding-bottom: 2px; }
.hl { height: 32px; margin-top: 2px; display: flex; background: #fedd74; }
.hl-a { width: 267px; display: flex; align-items: center; }
.hl-b { width: 28px; background: #fff; display: flex; align-items: center; justify-content: center; }
.ib-s { width: 24px; height: 24px; }
.hl-c { flex: 1; display: flex; align-items: center; padding-left: 4px; }
.hl-line { width: 1px; height: 32px; background: #fff; margin-left: 1px; }
.hl-c .tri { margin-left: 7px; }
.box { background: #efefef; border: 1px solid #d2d2d2; margin-top: 2px; padding: 0 9px; }
.box-c { height: 174px; }
.boxhead { height: 26px; display: flex; align-items: center; color: #006a92; font-size: 15px; margin-left: -2px; padding-bottom: 3px; white-space: nowrap; }
.crow { height: 26px; display: flex; align-items: center; white-space: nowrap; }
.crow-first { margin-top: 6px; }
.crow-num { margin-top: 1px; }
.cb + span { padding-bottom: 2px; }
.cb { width: 18px; height: 18px; border: 1px solid #777; border-radius: 3px; background: #fff; margin-right: 4px; flex: none; }
.cb.on { background: #0a5fc2; border-color: #0a5fc2; }
.cb svg { display: block; margin: -1px; }
.num { margin-left: auto; width: 90px; height: 26px; background: #fff; border: 1px solid #777; text-align: right; padding-right: 4px; font: 16px/24px "DejaVu Sans Mono", monospace; }
.r-add { height: 24px; margin-top: 2px; justify-content: space-between; }
.ib-a { width: 24px; height: 24px; }
.box-l { height: 144px; }
.listwrap { display: flex; gap: 3px; margin-top: 8px; align-items: flex-start; }
.tbl { height: 99px; border: 1px solid #ccc; padding: 1px; background: #fff; overflow: hidden; }
.tbl-a { width: 302px; }
.tbl-a .trow { grid-template-columns: 125px 125px 48px; }
.trow { display: grid; height: 24px; line-height: 21px; }
.trow span { padding-left: 4px; border-right: 1px solid #eee; overflow: hidden; white-space: nowrap; }
.trow span:last-child { border-right: 0; }
.thead { height: 24px; background: #efefef; border-bottom: 2px solid #ccc; }
.thead span { padding-left: 6px; border-right: 1px solid #ccc; }
.tsel { background: #cce4ea; height: 24px; }
.tsel span:last-child { letter-spacing: .5px; }
.talt { background: #f9f9f9; }
.tbl-a .talt { border-bottom: 1px solid #eee; height: 24px; }
.tbl-a .tsliver { height: 4px; }
.hscroll { height: 19px; background: #f0f0f0; padding: 7px 0 0 21px; }
.hscroll i { width: 198px; height: 6px; background: #888; }
.ib-x { width: 23px; height: 23px; margin-top: -1px; }
.r-info { height: 31px; margin-top: 3px; }
.r-info .plabel { padding-bottom: 2px; }
.r-info .ib-r { height: 31px; }
.psec-b .sechead { margin-top: 2px; }
.box-m { height: 144px; margin-top: 7px; }
.box-m .tbl { margin-top: 8px; }
.tbl-b { width: 328px; }
.tbl-b .trow { grid-template-columns: 88px 88px 1fr; }
.tbl-b .tb-rows .trow { border-bottom: 1px solid #eee; }
.tbl-b .thead { width: 324px; }
.tb-rows span { letter-spacing: .5px; }
.tb-rows span:nth-child(2) { letter-spacing: 0; }
.tb-body { display: flex; }
.tb-rows { width: 304px; flex: none; }
.vscroll { width: 20px; background: #efefef; padding: 21px 0 0 7px; height: 72px; flex: none; }
.vscroll i { width: 6px; height: 22px; background: #888; }
.collapse { height: 17px; flex: none; border-top: 1px solid #ccc; border-bottom: 1px solid #ccc; width: 364px; display: flex; align-items: center; justify-content: center; padding-top: 3px; }
.tri-up { border-top: 0; border-bottom: 6px solid #222; border-left-width: 6px; border-right-width: 6px; }
.pfoot { flex: 1; display: flex; justify-content: flex-end; gap: 5px; padding: 9px 16px 0 0; }
.btn { width: 60px; height: 28px; font: 15px/20px "Noto Sans CJK SC", sans-serif; padding: 0; border: 1px solid #006a92; }
.btn-ok { background: #006a92; color: #fff; }
.btn-no { background: #fff; color: #006a92; }
```
